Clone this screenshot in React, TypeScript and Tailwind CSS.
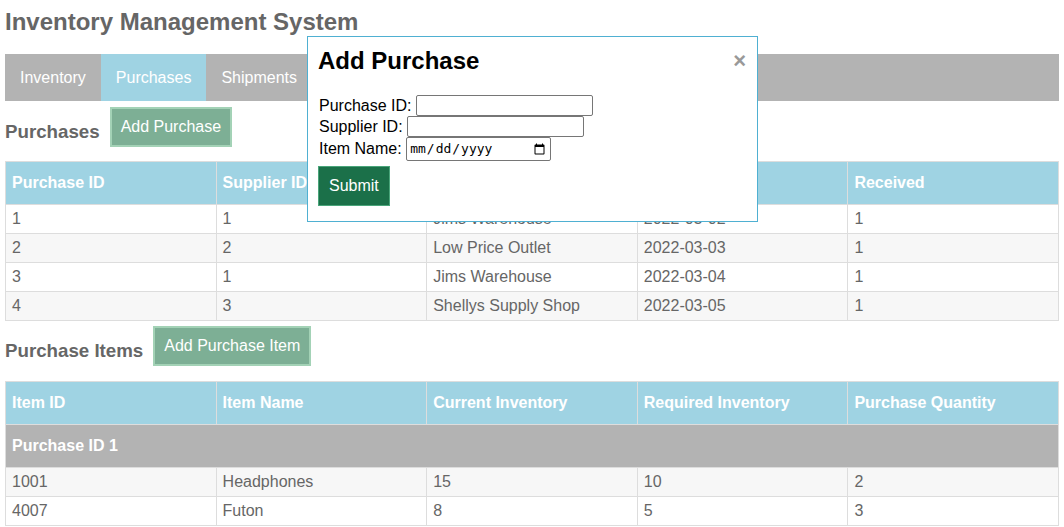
import { useState } from 'react'

const purchases = [
  { id: 1, supplierId: 1, supplier: 'Jims Warehouse', date: '2022-03-02', received: 1 },
  { id: 2, supplierId: 2, supplier: 'Low Price Outlet', date: '2022-03-03', received: 1 },
  { id: 3, supplierId: 1, supplier: 'Jims Warehouse', date: '2022-03-04', received: 1 },
  { id: 4, supplierId: 3, supplier: 'Shellys Supply Shop', date: '2022-03-05', received: 1 },
]

const items = [
  { id: 1001, name: 'Headphones', current: 15, required: 10, qty: 2 },
  { id: 4007, name: 'Futon', current: 8, required: 5, qty: 3 },
]

const th = 'border border-[#dddddd] px-[6px] h-[43px] text-left font-bold text-white'
const td = 'border border-[#dddddd] px-[6px] h-[29px]'

export default function App() {
  const [tab, setTab] = useState('Purchases')
  const [open, setOpen] = useState(true)

  return (
    <div className="relative px-[5px] text-[16px] text-[#666666]" style={{ fontFamily: '"Liberation Sans", Arial, sans-serif' }}>
      <h1 className="pt-[4px] h-[54px] text-[24px] font-bold text-[#666666]">Inventory Management System</h1>

      <nav className="flex h-[47px] bg-[#b3b3b3]">
        {['Inventory', 'Purchases', 'Shipments'].map(t => (
          <button
            key={t}
            onClick={() => setTab(t)}
            className={`px-[15px] text-white ${tab === t ? 'bg-[#9fd3e3]' : ''}`}
          >
            {t}
          </button>
        ))}
      </nav>

      {/* purchases */}
      <div className="flex items-end gap-[10px] pt-[6px] pb-[14px]">
        <h3 className="text-[18.72px] font-bold pb-[1px]">Purchases</h3>
        <button onClick={() => setOpen(true)} className="h-[40px] px-[9px] bg-[#7daf95] border-2 border-[#a3d2b6] text-white">
          Add Purchase
        </button>
      </div>

      <table className="w-full border-collapse table-fixed">
        <thead>
          <tr className="bg-[#9fd3e3]">
            <th className={th}>Purchase ID</th>
            <th className={th}>Supplier ID</th>
            <th className={th}>Supplier</th>
            <th className={th}>Date</th>
            <th className={th}>Received</th>
          </tr>
        </thead>
        <tbody>
          {purchases.map((p, i) => (
            <tr key={p.id} className={i % 2 ? 'bg-[#f7f7f7]' : 'bg-white'}>
              <td className={td}>{p.id}</td>
              <td className={td}>{p.supplierId}</td>
              <td className={td}>{p.supplier}</td>
              <td className={td}>{p.date}</td>
              <td className={td}>{p.received}</td>
            </tr>
          ))}
        </tbody>
      </table>

      {/* purchase items */}
      <div className="flex items-end gap-[10px] pt-[5px] pb-[15px]">
        <h3 className="text-[18.72px] font-bold pb-[1px]">Purchase Items</h3>
        <button className="h-[40px] px-[9px] bg-[#7daf95] border-2 border-[#a3d2b6] text-white">
          Add Purchase Item
        </button>
      </div>

      <table className="w-full border-collapse table-fixed">
        <thead>
          <tr className="bg-[#9fd3e3]">
            <th className={th}>Item ID</th>
            <th className={th}>Item Name</th>
            <th className={th}>Current Inventory</th>
            <th className={th}>Required Inventory</th>
            <th className={th}>Purchase Quantity</th>
          </tr>
        </thead>
        <tbody>
          <tr className="bg-[#b3b3b3]">
            <td colSpan={5} className="border border-[#dddddd] px-[6px] h-[43px] font-bold text-white">Purchase ID 1</td>
          </tr>
          {items.map((it, i) => (
            <tr key={it.id} className={i % 2 ? 'bg-white' : 'bg-[#f7f7f7]'}>
              <td className={td}>{it.id}</td>
              <td className={td}>{it.name}</td>
              <td className={td}>{it.current}</td>
              <td className={td}>{it.required}</td>
              <td className={td}>{it.qty}</td>
            </tr>
          ))}
        </tbody>
      </table>

      {open && (
        <div className="absolute left-[307px] top-[36px] w-[451px] h-[186px] bg-white border border-[#4fb0d2] pl-[10px] pr-[11px] pt-[9px] text-black">
          <div className="flex items-start justify-between">
            <h2 className="text-[24px] font-bold leading-[30px]">Add Purchase</h2>
            <button onClick={() => setOpen(false)} className="text-[22px] font-bold text-[#999999] leading-[30px]">×</button>
          </div>
          <form className="mt-[19px] flex flex-col items-start" onSubmit={e => e.preventDefault()}>
            <label className="flex items-center h-[21px] pl-[1px]">
              Purchase ID:&nbsp;<input type="text" className="w-[177px] h-[21px] border border-[#767676] rounded-[2px]" />
            </label>
            <label className="flex items-center h-[21px] pl-[1px]">
              Supplier ID:&nbsp;<input type="text" className="w-[177px] h-[21px] border border-[#767676] rounded-[2px]" />
            </label>
            <label className="flex items-center h-[24px] pl-[1px]">
              Item Name:&nbsp;<input type="date" className="w-[145px] h-[24px] border border-[#767676] rounded-[2px] text-[13px] px-[2px]" style={{ fontFamily: 'monospace' }} />
            </label>
            <button type="submit" className="mt-[5px] h-[40px] px-[10px] bg-[#1b7049] border border-[#49a57a] text-white">Submit</button>
          </form>
        </div>
      )}
    </div>
  )
}
